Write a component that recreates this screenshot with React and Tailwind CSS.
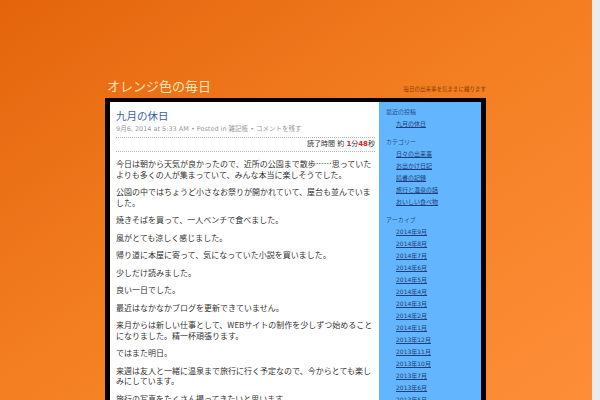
const paragraphs = [
  '今日は朝から天気が良かったので、近所の公園まで散歩……思っていたよりも多くの人が集まっていて、みんな本当に楽しそうでした。',
  '公園の中ではちょうど小さなお祭りが開かれていて、屋台も並んでいました。',
  '焼きそばを買って、一人ベンチで食べました。',
  '風がとても涼しく感じました。',
  '帰り道に本屋に寄って、気になっていた小説を買いました。',
  '少しだけ読みました。',
  '良い一日でした。',
  '最近はなかなかブログを更新できていません。',
  '来月からは新しい仕事として、WEBサイトの制作を少しずつ始めることになりました。精一杯頑張ります。',
  'ではまた明日。',
  '来週は友人と一緒に温泉まで旅行に行く予定なので、今からとても楽しみにしています。',
  '旅行の写真をたくさん撮ってきたいと思います。',
]

const recent = ['九月の休日']
const categories = ['日々の出来事', 'お出かけ日記', '読書の記録', '旅行と温泉の話', 'おいしい食べ物']
const archives = [
  '2014年9月', '2014年8月', '2014年7月', '2014年6月', '2014年5月',
  '2014年4月', '2014年3月', '2014年2月', '2014年1月', '2013年12月',
  '2013年11月', '2013年10月', '2013年7月', '2013年6月', '2013年5月',
]

function Widget({ title, items, first }) {
  return (
    <div className={first ? '' : 'mt-[6px]'}>
      <h3 className="text-[6px] leading-[12px] text-[#2a4d86]">{title}</h3>
      <ul>
        {items.map((item) => (
          <li key={item} className="pl-[10px] text-[6px] leading-[12px]">
            <a className="text-[#1f3f7c] underline">{item}</a>
          </li>
        ))}
      </ul>
    </div>
  )
}

export default function App() {
  return (
    <div className="flex h-[400px] w-[600px] overflow-hidden font-['DejaVu_Sans','Noto_Sans_CJK_JP',sans-serif]">
      <div className="flex-1 bg-linear-to-br from-[#e3640a] via-[#f47f22] to-[#fd8e38]">
        <div className="ml-[105px] w-[381px] pt-[78px]">

          {/* Header */}
          <div className="mb-[2px] flex items-end justify-between">
            <a className="pl-[2px] text-[13px] leading-[18px] text-[#ffe2b8]">オレンジ色の毎日</a>
            <p className="mb-[3px] text-[5.5px] leading-[8px] text-[#8a3e00]">毎日の出来事を気ままに綴ります</p>
          </div>

          {/* Page box */}
          <div className="flex border-x-[5px] border-t-4 border-black">
            <main className="w-[269px] bg-white pl-[6px] pr-[4px] pt-[6px] text-[#333]">
              <h2 className="text-[10.5px] leading-[16px] text-[#3d5e9c]">九月の休日</h2>
              <p className="text-[6.5px] leading-[10px] text-[#999]">
                9月6, 2014 at 5:33 AM • Posted in 雑記帳 • コメントを残す
              </p>
              <div className="mt-[3px] border-y border-dotted border-[#b5b5b5] text-right text-[7px] leading-[13px] text-[#333]">
                読了時間 約 <b className="text-[#e3221c]">1</b>分<b className="text-[#e3221c]">48</b>秒
              </div>
              <div className="mt-[7px] font-['Noto_Sans_CJK_JP',sans-serif]">
                {paragraphs.map((p) => (
                  <p key={p} className="mb-[7px] text-[8px] leading-[10.5px]">{p}</p>
                ))}
              </div>
            </main>

            <aside className="flex-1 bg-[#63b6fd] pl-[7px] pt-[4px]">
              <Widget title="最近の投稿" items={recent} first />
              <Widget title="カテゴリー" items={categories} />
              <Widget title="アーカイブ" items={archives} />
            </aside>
          </div>
        </div>
      </div>
      <div className="w-[8px] bg-[#ebebeb]" />
    </div>
  )
}
